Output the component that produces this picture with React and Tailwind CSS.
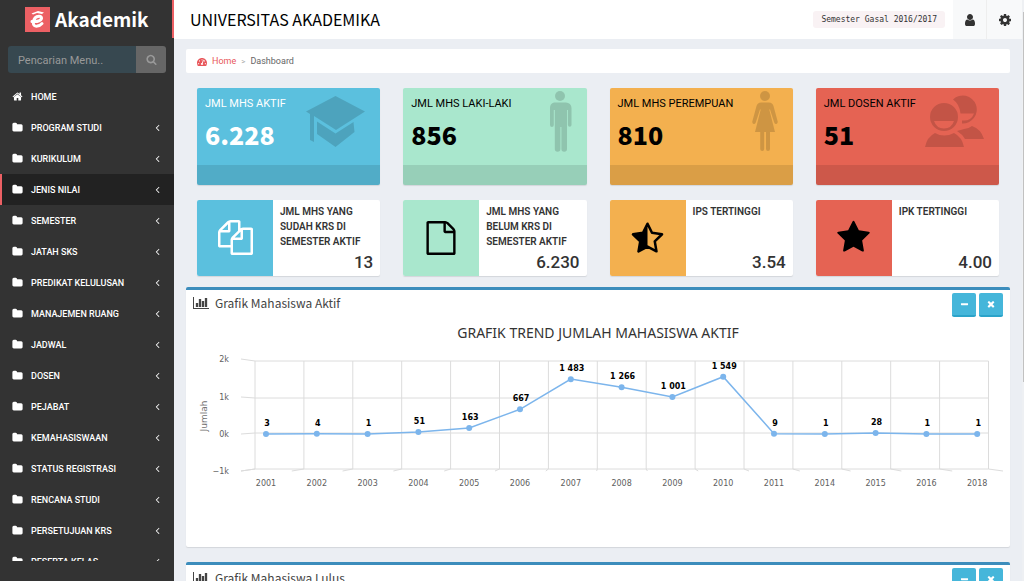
import React, { useState } from "react";
import { FaTachometerAlt } from "react-icons/fa";

const ICONS = {
  home: "M1472 992v480q0 26-19 45t-45 19h-384v-384h-256v384h-384q-26 0-45-19t-19-45v-480q0-1 .5-3t.5-3l575-474 575 474q1 2 1 6zm223-69l-62 74q-8 9-21 11h-3q-13 0-21-7l-692-577-692 577q-12 8-24 7-13-2-21-11l-62-74q-8-10-7-23.5t11-21.5l719-599q32-26 76-26t76 26l244 204v-195q0-14 9-23t23-9h192q14 0 23 9t9 23v408l219 182q10 8 11 21.5t-7 23.5z",
  folder: "M1728 608v704q0 92-66 158t-158 66h-1216q-92 0-158-66t-66-158v-960q0-92 66-158t158-66h320q92 0 158 66t66 158v32h672q92 0 158 66t66 158z",
  angleLeft: "M1203 544q0 13-10 23l-393 393 393 393q10 10 10 23t-10 23l-50 50q-10 10-23 10t-23-10l-466-466q-10-10-10-23t10-23l466-466q10-10 23-10t23 10l50 50q10 10 10 23z",
  search: "M1216 832q0-185-131.5-316.5t-316.5-131.5-316.5 131.5-131.5 316.5 131.5 316.5 316.5 131.5 316.5-131.5 131.5-316.5zm512 832q0 52-38 90t-90 38q-54 0-90-38l-343-342q-179 124-399 124-143 0-273.5-55.5t-225-150-150-225-55.5-273.5 55.5-273.5 150-225 225-150 273.5-55.5 273.5 55.5 225 150 150 225 55.5 273.5q0 220-124 399l343 343q37 37 37 90z",
  user: "M1536 1399q0 109-62.5 187t-150.5 78h-854q-88 0-150.5-78t-62.5-187q0-85 8.5-160.5t31.5-152 58.5-131 94-89 134.5-34.5q131 128 313 128t313-128q76 0 134.5 34.5t94 89 58.5 131 31.5 152 8.5 160.5zm-256-887q0 159-112.5 271.5t-271.5 112.5-271.5-112.5-112.5-271.5 112.5-271.5 271.5-112.5 271.5 112.5 112.5 271.5z",
  cog: "M1152 896q0-106-75-181t-181-75-181 75-75 181 75 181 181 75 181-75 75-181zm512-109v222q0 12-8 23t-20 13l-185 28q-19 54-39 91 35 50 107 138 10 12 10 25t-9 23q-27 37-99 108t-94 71q-12 0-26-9l-138-108q-44 23-91 38-16 136-29 186-7 28-36 28h-222q-14 0-24.5-8.5t-11.5-21.5l-28-184q-49-16-90-37l-141 107q-10 9-25 9-14 0-25-11-126-114-165-168-7-10-7-23 0-12 8-23 15-21 51-66.5t54-70.5q-27-50-41-99l-183-27q-13-2-21-12.5t-8-23.5v-222q0-12 8-23t19-13l186-28q14-46 39-92-40-57-107-138-10-12-10-24 0-10 9-23 26-36 98.5-107.5t94.5-71.5q13 0 26 10l138 107q44-23 91-38 16-136 29-186 7-28 36-28h222q14 0 24.5 8.5t11.5 21.5l28 184q49 16 90 37l142-107q9-9 24-9 13 0 25 10 129 119 165 170 7 8 7 22 0 12-8 23-15 21-51 66.5t-54 70.5q26 50 41 98l183 28q13 2 21 12.5t8 23.5z",
  minus: "M1600 736v192q0 40-28 68t-68 28h-1216q-40 0-68-28t-28-68v-192q0-40 28-68t68-28h1216q40 0 68 28t28 68z",
  times: "M1490 1322q0 40-28 68l-136 136q-28 28-68 28t-68-28l-294-294-294 294q-28 28-68 28t-68-28l-136-136q-28-28-28-68t28-68l294-294-294-294q-28-28-28-68t28-68l136-136q28-28 68-28t68 28l294 294 294-294q28-28 68-28t68 28l136 136q28 28 28 68t-28 68l-294 294 294 294q28 28 28 68z",
  file: "M1596 380q28 28 48 76t20 88v1152q0 40-28 68t-68 28h-1344q-40 0-68-28t-28-68v-1600q0-40 28-68t68-28h896q40 0 88 20t76 48zm-444-244v376h376q-10-29-22-41l-313-313q-12-12-41-22zm384 1528v-1024h-416q-40 0-68-28t-28-68v-416h-768v1536h1280z",
  files: "M1696 384q40 0 68 28t28 68v1216q0 40-28 68t-68 28h-960q-40 0-68-28t-28-68v-288h-544q-40 0-68-28t-28-68v-672q0-40 20-88t48-76l408-408q28-28 76-48t88-20h416q40 0 68 28t28 68v328q68-40 128-40h416zm-544 213l-299 299h299v-299zm-640-384l-299 299h299v-299zm196 647l316-316v-416h-384v416q0 40-28 68t-68 28h-416v640h512v-256q0-40 20-88t48-76zm956 804v-1152h-384v416q0 40-28 68t-68 28h-416v640h896z",
  star: "M1728 647q0 22-26 48l-363 354 86 500q1 7 1 20 0 21-10.5 35.5t-30.5 14.5q-19 0-40-12l-449-236-449 236q-22 12-40 12-21 0-31.5-14.5t-10.5-35.5q0-6 2-20l86-500-364-354q-25-27-25-48 0-37 56-46l502-73 225-455q19-41 49-41t49 41l225 455 502 73q56 9 56 46z",
};

const Icon = ({ name, className }) => (
  <svg viewBox="0 0 1792 1792" fill="currentColor" className={className} aria-hidden="true">
    <path d={ICONS[name]} />
  </svg>
);

const HalfStar = ({ className }) => (
  <svg viewBox="0 0 1792 1792" className={className} aria-hidden="true">
    <path d="M896 190l230 466 514 75-372 362 88 512-460-242-460 242 88-512-372-362 514-75z" fill="none" stroke="currentColor" strokeWidth="130" strokeLinejoin="round" />
    <path d="M896 190v1173l-460 242 88-512-372-362 514-75z" fill="currentColor" />
  </svg>
);

const BarChartIcon = () => (
  <svg viewBox="0 0 2048 1792" fill="currentColor" className="h-[14px] w-4" aria-hidden="true">
    <path d="M660 896v512h-296v-512h296zm384-512v1024h-296v-1024h296zm1004 1152v128h-2048v-1536h128v1408h1920zm-620-896v768h-296v-768h296zm384-384v1152h-296v-1152h296z" />
  </svg>
);

const CapIcon = () => (
  <svg viewBox="0 0 59 52" fill="currentColor" className="h-[52px] w-[59px]">
    <path d="M29.500 0L59 15.500 30 34 8 20v26l-4-2V18L0 15.500z" />
    <path d="M11 25.500l18.500 12L47.500 26l1 10-19 15L11 38z" />
  </svg>
);

const ManIcon = () => (
  <svg viewBox="0 0 24 61" fill="currentColor" className="h-[61px] w-6">
    <circle cx="12" cy="5" r="5" />
    <path d="M6 11.500h12a5.500 5.500 0 0 1 5.500 5.500v17a1.800 1.800 0 0 1-3.600 0V19h-.9v39a2.700 2.700 0 0 1-5.600 0V36h-1v22a2.700 2.700 0 0 1-5.600 0V19h-1v15a1.900 1.900 0 0 1-3.800 0V17A5.500 5.500 0 0 1 6 11.500z" />
  </svg>
);

const WomanIcon = () => (
  <svg viewBox="0 0 26 61" fill="currentColor" className="h-[61px] w-[26px]">
    <circle cx="13" cy="5" r="5" />
    <path d="M9 11.500h8q3.500 0 4.500 3.500l4.200 15.500q.3 2-1.300 2.500-1.500.3-2.200-1.500L18 18.500h-.7L23 41h-5v17a2 2 0 0 1-4 0V41h-1.800v17a2 2 0 0 1-4 0V41H3l5.700-22.500H8L3.800 31.500Q3.100 33.300 1.600 33 0 32.500.3 30.500L4.500 15q1-3.500 4.500-3.500z" />
  </svg>
);

const PeopleIcon = () => (
  <svg viewBox="0 0 59 53" fill="currentColor" className="h-[53px] w-[59px]">
    <path d="M28 4.500A14 14 0 1 1 37 28.500V25.500q9 1 12-7H35.500Q34.500 9 28 4.500z" />
    <path fillRule="evenodd" d="M19 8a14 14 0 1 1 0 28 14 14 0 0 1 0-28zM9 26h20q-2.500 7.500-10 7.500T9 26z" />
    <path d="M0 52q2-10 10-14 9 5 19 0 8 4 10 14zM32 36l7-2q4 0 8-3 9 3 12 13H40q-3-5-8-8z" />
  </svg>
);

const MENU = [
  "PROGRAM STUDI",
  "KURIKULUM",
  "JENIS NILAI",
  "SEMESTER",
  "JATAH SKS",
  "PREDIKAT KELULUSAN",
  "MANAJEMEN RUANG",
  "JADWAL",
  "DOSEN",
  "PEJABAT",
  "KEMAHASISWAAN",
  "STATUS REGISTRASI",
  "RENCANA STUDI",
  "PERSETUJUAN KRS",
  "PESERTA KELAS",
];

const STATS = [
  { title: "JML MHS AKTIF", value: "6.228", color: "bg-[#5bc0de] text-white", icon: <CapIcon /> },
  { title: "JML MHS LAKI-LAKI", value: "856", color: "bg-[#a9e7cd] text-black", icon: <ManIcon /> },
  { title: "JML MHS PEREMPUAN", value: "810", color: "bg-[#f3b04f] text-black", icon: <WomanIcon /> },
  { title: "JML DOSEN AKTIF", value: "51", color: "bg-[#e56353] text-black", icon: <PeopleIcon /> },
];

const INFOS = [
  { title: "JML MHS YANG SUDAH KRS DI SEMESTER AKTIF", value: "13", color: "bg-[#5bc0de] text-white", icon: <Icon name="files" className="size-[35px]" /> },
  { title: "JML MHS YANG BELUM KRS DI SEMESTER AKTIF", value: "6.230", color: "bg-[#a9e7cd] text-black", icon: <Icon name="file" className="size-[34px]" /> },
  { title: "IPS TERTINGGI", value: "3.54", color: "bg-[#f3b04f] text-black", icon: <HalfStar className="size-[35px]" /> },
  { title: "IPK TERTINGGI", value: "4.00", color: "bg-[#e56353] text-black", icon: <Icon name="star" className="size-[35px]" /> },
];

const TREND = [
  [2001, 3],
  [2002, 4],
  [2003, 1],
  [2004, 51],
  [2005, 163],
  [2006, 667],
  [2007, 1483],
  [2008, 1266],
  [2009, 1001],
  [2010, 1549],
  [2011, 9],
  [2014, 1],
  [2015, 28],
  [2016, 1],
  [2018, 1],
];

const Sidebar = () => {
  const [active, setActive] = useState("JENIS NILAI");
  const [keyword, setKeyword] = useState("");

  return (
    <aside className="flex h-screen w-[174px] shrink-0 flex-col bg-[#333] pb-5">
      <a href="#" className="flex h-[38px] shrink-0 items-center border-r-2 border-[#ec6064] pl-[25px] text-white">
        <svg viewBox="0 0 25 25" className="size-[25px]" aria-hidden="true">
          <rect width="25" height="25" fill="#ec6064" />
          <path d="M6.500 6.500l6.500-2.500 6 1.500-2 1.500-5-1-4 1.500z" fill="#fff" />
          <path d="M7 14.500q8.500.5 9.500-3 .3-2.300-2.500-2.200-5 .3-5.700 6.200 0 4.200 4 3.600 2.800-.5 4.700-2.600" fill="none" stroke="#fff" strokeWidth="3" strokeLinecap="round" />
        </svg>
        <span className="pl-[5px] font-['Noto_Sans_CJK_JP',sans-serif] text-[19px] leading-[38px] font-bold">Akademik</span>
      </a>
      <form className="mx-2 mt-2 mb-2 flex h-[27px] shrink-0" onSubmit={(e) => e.preventDefault()}>
        <input
          type="text"
          aria-label="Pencarian Menu"
          placeholder="Pencarian Menu.."
          value={keyword}
          onChange={(e) => setKeyword(e.target.value)}
          className="min-w-0 flex-1 rounded-l-[3px] bg-[#374850] pt-[3px] pl-[10px] text-[11px] text-white outline-none placeholder:text-[#999]"
        />
        <button type="submit" aria-label="Cari" className="flex w-[30px] items-center justify-center rounded-r-[3px] bg-[#666] text-[#999]">
          <Icon name="search" className="size-[11px]" />
        </button>
      </form>
      <nav className="min-h-0 flex-1 overflow-hidden">
        <a href="#" className="flex h-[31px] items-center pl-3 text-[9px] font-medium text-white">
          <Icon name="home" className="size-[11px]" />
          <span className="pt-[3px] pl-2">HOME</span>
        </a>
        {MENU.map((item) => (
          <a
            key={item}
            href="#"
            onClick={() => setActive(item)}
            className={`flex h-[31px] items-center border-l-2 pr-[11px] pl-[10px] text-[9px] font-medium text-white ${item === active ? "border-[#ec6064] bg-[#222]" : "border-transparent"}`}
          >
            <Icon name="folder" className="size-[11px]" />
            <span className="flex-1 pt-[3px] pl-2 whitespace-nowrap">{item}</span>
            <Icon name="angleLeft" className="size-[11px]" />
          </a>
        ))}
      </nav>
    </aside>
  );
};

const Header = () => (
  <header className="flex h-[39px] shrink-0 items-stretch bg-white text-[#333]">
    <h1 className="flex-1 pl-4 font-['Noto_Sans_CJK_JP',sans-serif] text-[16px] leading-[39px] text-black">UNIVERSITAS AKADEMIKA</h1>
    <span className="mr-2 self-center rounded-[3px] bg-[#f9f2f4] px-2 font-['DejaVu_Sans_Mono',monospace] text-[8px] leading-[17px] text-[#333]">
      Semester Gasal 2016/2017
    </span>
    <button aria-label="Pengguna" className="flex w-[34px] items-center justify-center border-r border-[#eee] bg-[#f8f9fa]">
      <Icon name="user" className="size-[14px]" />
    </button>
    <button aria-label="Pengaturan" className="flex w-[35px] items-center justify-center bg-[#f8f9fa]">
      <Icon name="cog" className="size-[14px]" />
    </button>
  </header>
);

const StatCard = ({ title, value, color, icon }) => (
  <div className={`relative rounded-[2px] shadow-[0_1px_1px_rgba(0,0,0,0.1)] ${color}`}>
    <div className="h-[77px] px-2 pt-2">
      <p className="text-[11px] leading-4">{title}</p>
      <p className="font-['Noto_Sans_CJK_JP',sans-serif] text-[25px] leading-[44px] font-extrabold">{value}</p>
    </div>
    <div className="absolute top-1 right-[15px] flex h-[59px] items-center text-black/15">{icon}</div>
    <div className="h-5 rounded-b-[2px] bg-black/10" />
  </div>
);

const InfoCard = ({ title, value, color, icon }) => (
  <div className="flex h-[76px] overflow-hidden rounded-[2px] bg-white shadow-[0_1px_1px_rgba(0,0,0,0.1)]">
    <div className={`flex w-[76px] shrink-0 items-center justify-center pb-px ${color}`}>{icon}</div>
    <div className="flex flex-1 flex-col justify-between px-[7px] pt-1 pb-1 text-[#333]">
      <p className="text-[10px] leading-[15px] font-semibold">{title}</p>
      <p className="text-right text-[17px] leading-5 font-medium">{value}</p>
    </div>
  </div>
);

const TrendChart = () => {
  const gridX = (i) => 69 + i * 48.9;
  const edgeX = (i) => 55 + i * 50.8;
  const pointX = (i) => 80 + i * 50.8;
  const pointY = (v) => 113 - v * 0.037;
  const rows = [
    { label: "2k", y: 40, edge: 38 },
    { label: "1k", y: 77, edge: 76 },
    { label: "0k", y: 112, edge: 113 },
    { label: "−1k", y: 148, edge: 150 },
  ];

  return (
    <svg viewBox="0 0 824 226" className="block w-full font-['Noto_Sans',sans-serif]" role="img" aria-label="Grafik trend jumlah mahasiswa aktif">
      <text x="412" y="17" textAnchor="middle" className="fill-[#333] text-[14px]">GRAFIK TREND JUMLAH MAHASISWA AKTIF</text>
      <g stroke="#dcdcdc" fill="none">
        {rows.map((r) => (
          <path key={r.label} d={`M55 ${r.edge}L69 ${r.y}H802.5`} />
        ))}
        {Array.from({ length: 16 }, (_, i) => (
          <path key={i} d={`M${gridX(i)} 40V148L${edgeX(i)} 150`} />
        ))}
      </g>
      {rows.map((r) => (
        <text key={r.label} x="43" y={r.edge + 3} textAnchor="end" className="fill-[#606060] font-['DejaVu_Sans',sans-serif] text-[8px]">{r.label}</text>
      ))}
      <text transform="translate(21 95) rotate(-90)" textAnchor="middle" className="fill-[#707070] font-['DejaVu_Sans',sans-serif] text-[9px]">Jumlah</text>
      <polyline points={TREND.map(([, v], i) => `${pointX(i)},${pointY(v)}`).join(" ")} fill="none" stroke="#7cb5ec" strokeWidth="1.500" />
      {TREND.map(([year, v], i) => (
        <g key={year}>
          <circle cx={pointX(i)} cy={pointY(v)} r="3" fill="#7cb5ec" />
          <text x={pointX(i) + 1} y={pointY(v) - 8} textAnchor="middle" className="fill-black font-['DejaVu_Sans',sans-serif] text-[8px] font-bold">
            {v > 999 ? `${Math.floor(v / 1000)} ${String(v % 1000).padStart(3, "0")}` : v}
          </text>
          <text x={pointX(i)} y="165" textAnchor="middle" className="fill-[#606060] font-['DejaVu_Sans',sans-serif] text-[8px]">{year}</text>
        </g>
      ))}
    </svg>
  );
};

const Box = ({ title, children }) => (
  <section className="rounded-[2px] border-t-[3px] border-[#3c8dbc] bg-white shadow-[0_1px_1px_rgba(0,0,0,0.1)]">
    <div className="flex h-[31px] items-start justify-between px-[7px] text-[#444]">
      <div className="flex h-[25px] items-center gap-[6px]">
        <BarChartIcon />
        <h2 className="font-['Noto_Sans_CJK_JP',sans-serif] text-[12px] leading-[25px]">{title}</h2>
      </div>
      <div className="flex gap-[3px] pt-[3px] text-white">
        <button aria-label="Ciutkan" className="flex h-6 w-6 items-center justify-center rounded-[2px] border-b-2 border-[#2ba3c9] bg-[#45b6da]">
          <Icon name="minus" className="size-[9px]" />
        </button>
        <button aria-label="Tutup" className="flex h-6 w-6 items-center justify-center rounded-[2px] border-b-2 border-[#2ba3c9] bg-[#45b6da]">
          <Icon name="times" className="size-[10px]" />
        </button>
      </div>
    </div>
    {children}
  </section>
);

const App = () => (
  <div className="relative flex h-screen overflow-hidden bg-[#ebeef3] font-[Roboto,sans-serif]">
    <Sidebar />
    <div className="flex min-w-0 flex-1 flex-col border-r-2 border-[#eef0f3]">
      <Header />
      <main className="min-h-0 flex-1 overflow-hidden pt-[10px] pr-3 pl-3">
        <nav className="flex h-6 items-center rounded-[2px] bg-white pt-[2px] pl-[11px] text-[9px] text-[#666]">
          <a href="#" className="flex items-center text-[#e8575b]">
            <FaTachometerAlt className="mr-[5px] size-[10px]" />
            Home
          </a>
          <span className="px-[5px] text-[8px] text-[#aaa]">&gt;</span>
          <span>Dashboard</span>
        </nav>
        <div className="mt-[15px] grid grid-cols-4 gap-x-[23px] gap-y-[15px] px-[11px]">
          {STATS.map((s) => (
            <StatCard key={s.title} {...s} />
          ))}
          {INFOS.map((s) => (
            <InfoCard key={s.title} {...s} />
          ))}
        </div>
        <div className="mt-[11px] flex flex-col gap-[15px]">
          <Box title="Grafik Mahasiswa Aktif">
            <TrendChart />
          </Box>
          <Box title="Grafik Mahasiswa Lulus">
            <div className="h-56" />
          </Box>
        </div>
      </main>
    </div>
    {/* scrollbar thumb */}
    <div className="absolute top-3 right-0 h-[370px] w-px bg-[#c1c1c1]" />
  </div>
);

export default App;
